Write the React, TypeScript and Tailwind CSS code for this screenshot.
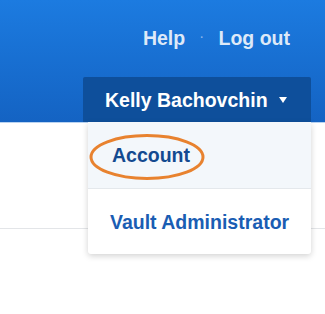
export default function App() {
  return (
    <div
      className="relative w-[325px] h-[314px] overflow-hidden bg-white"
      style={{ fontFamily: '"Liberation Sans", Arial, sans-serif' }}
    >
      {/* Header */}
      <header className="h-[122px] flex flex-col items-end bg-gradient-to-b from-[#1c7be0] to-[#1463c3]">
        <nav className="mt-[27px] mr-[35px] flex items-center text-[19.5px] leading-[22px] font-bold text-[#dde9f8]">
          <a href="#">Help</a>
          <span className="mx-[15px] text-[10px] text-[#8fb8ea]">·</span>
          <a href="#">Log out</a>
        </nav>
        <button className="mt-auto mr-[14px] h-[45px] w-[228px] flex items-center pl-[22px] rounded-t-[2px] bg-[#0e4f9b] text-white text-[19.5px] leading-[22px] font-bold">
          <span>Kelly Bachovchin</span>
          <svg className="ml-[11px] mt-[1px]" width="8" height="6" viewBox="0 0 8 6">
            <path d="M0 0 H8 L4 6 Z" fill="white" />
          </svg>
        </button>
      </header>
      <div className="h-px bg-[#b9d3f1]" />

      {/* Page content below */}
      <div className="h-[106px] border-b border-[#e3e5e8]" />

      {/* Dropdown menu */}
      <div className="absolute top-[122px] left-[88px] w-[223px] bg-white rounded-b-[3px] shadow-[0_2px_6px_rgba(0,0,0,0.18)] text-[19.5px] leading-[22px] font-bold">
        <div className="relative h-[67px] flex items-center pl-[24px] bg-[#f3f7fb] border-b border-[#e4e8ec] text-[#134a90]">
          <span>Account</span>
          <svg
            className="absolute left-[1px] top-[11px]"
            width="118"
            height="48"
            viewBox="0 0 118 48"
          >
            <ellipse cx="58" cy="24" rx="56" ry="21.5" fill="none" stroke="#e8822f" strokeWidth="3" />
          </svg>
        </div>
        <div className="h-[65px] flex items-center pl-[22px] text-[#1a5db3]">
          Vault Administrator
        </div>
      </div>
    </div>
  );
}
